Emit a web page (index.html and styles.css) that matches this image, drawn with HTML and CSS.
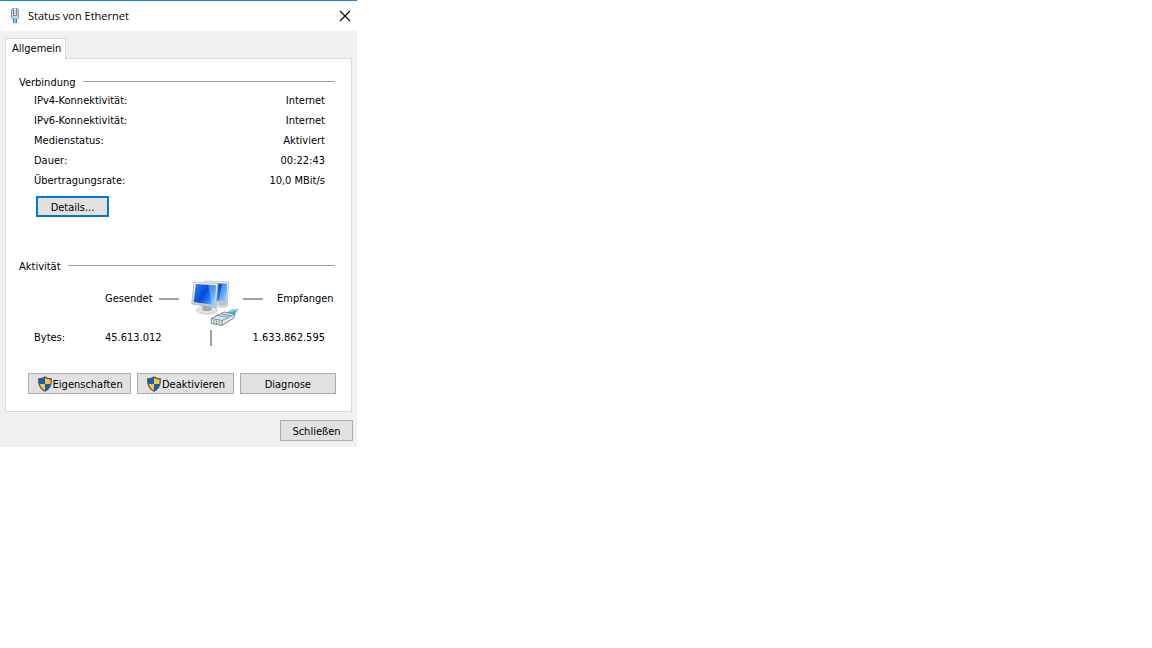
FILE: index.html
```html
<!DOCTYPE html>
<html lang="de">
<head>
    <meta charset="UTF-8">
    <meta name="viewport" content="width=device-width, initial-scale=1.0">
    <title>Status von Ethernet</title>
    <link rel="stylesheet" href="styles.css">
</head>
<body>
    <svg class="symbols" aria-hidden="true">
        <symbol id="shield" viewBox="0 0 16 16">
            <path d="M8 0.3 C6.3 1.6 3.7 2.3 1.2 2.2 C0.6 8.4 2.6 13 8 15.8 C13.4 13 15.4 8.4 14.8 2.2 C12.3 2.3 9.7 1.6 8 0.3Z" fill="#4f5256"/>
            <path d="M8 1.8 C6.5 2.8 4.6 3.4 2.5 3.5 C2.3 5 2.3 6.6 2.7 8 H8Z" fill="#0a63c4"/>
            <path d="M8 1.8 C9.5 2.8 11.4 3.4 13.5 3.5 C13.7 5 13.7 6.6 13.3 8 H8Z" fill="#ffc03a"/>
            <path d="M2.7 8 C3.4 11 5.1 13 8 14.5 V8Z" fill="#ffc03a"/>
            <path d="M13.3 8 C12.6 11 10.9 13 8 14.5 V8Z" fill="#0a63c4"/>
        </symbol>
    </svg>

    <main class="dialog">
        <header class="title-bar">
            <svg class="title-icon" viewBox="0 0 12 16" aria-hidden="true">
                <path d="M2.5 1.5 L3.5 0.5 H8.5 L9.5 1.5 V9.5 L8.5 11 H3.5 L2.5 9.5Z" fill="#ccd6e0" stroke="#8496a8"/>
                <path d="M4.5 0.5 V7.5 H7.5 V0.5" fill="#f3f6f9" stroke="#6c7f92"/>
                <path d="M6 2 V6" stroke="#9fb0c0"/>
                <path d="M4.5 11 V15 M7.5 11 V15" stroke="#1d86ad"/>
                <path d="M6 11 V15.5" stroke="#6fd3f2" stroke-width="2"/>
            </svg>
            <h1>Status von Ethernet</h1>
            <button type="button" class="close-btn" aria-label="Schließen">
                <svg viewBox="0 0 10 10" aria-hidden="true">
                    <path d="M0 0 L10 10 M10 0 L0 10" stroke="#000" stroke-width="1.1"/>
                </svg>
            </button>
        </header>

        <div class="tabs" role="tablist">
            <button type="button" class="tab" role="tab" aria-selected="true">Allgemein</button>
        </div>

        <section class="panel" role="tabpanel">
            <h2>Verbindung</h2>
            <dl class="info">
                <div class="info-row"><dt>IPv4-Konnektivität:</dt><dd>Internet</dd></div>
                <div class="info-row"><dt>IPv6-Konnektivität:</dt><dd>Internet</dd></div>
                <div class="info-row"><dt>Medienstatus:</dt><dd>Aktiviert</dd></div>
                <div class="info-row"><dt>Dauer:</dt><dd>00:22:43</dd></div>
                <div class="info-row"><dt>Übertragungsrate:</dt><dd>10,0 MBit/s</dd></div>
            </dl>
            <button type="button" class="btn btn-default">Details...</button>

            <h2 class="activity-title">Aktivität</h2>
            <table class="activity">
                <thead>
                    <tr>
                        <td class="col-label"></td>
                        <th scope="col" class="col-sent"><span class="dash-after">Gesendet</span></th>
                        <td class="col-icon">
                            <svg class="network-icon" viewBox="0 0 48 48" aria-hidden="true">
                                <defs>
                                    <linearGradient id="screen" x1="0" y1="0.2" x2="1" y2="0.8">
                                        <stop offset="0" stop-color="#2a7df0"/>
                                        <stop offset="0.45" stop-color="#0b48d6"/>
                                        <stop offset="0.75" stop-color="#2f86f5"/>
                                        <stop offset="1" stop-color="#8ccdff"/>
                                    </linearGradient>
                                    <linearGradient id="metal" x1="0" y1="0" x2="0" y2="1">
                                        <stop offset="0" stop-color="#f4f6f7"/>
                                        <stop offset="1" stop-color="#c0c6ca"/>
                                    </linearGradient>
                                </defs>
                                <!-- rear monitor -->
                                <ellipse cx="31" cy="25.5" rx="7" ry="2.5" fill="#d5d9dc"/>
                                <path d="M28 20 L35 20 L35 25 L28 25Z" fill="#b5bcc1"/>
                                <path d="M14 1 L38 2 L36.3 23.5 L17 22Z" fill="url(#metal)" stroke="#b4babf" stroke-width="0.7"/>
                                <path d="M16 3 L36.2 3.8 L34.7 21.3 L18 20Z" fill="url(#screen)"/>
                                <path d="M31 3.6 L36.2 3.8 L34.7 21.3 L28 20.8Z" fill="#8cc8ff" opacity="0.5"/>
                                <!-- front monitor -->
                                <ellipse cx="16" cy="30" rx="10.5" ry="4" fill="#e1e4e6" stroke="#b4babf" stroke-width="0.7"/>
                                <path d="M12 25 L20 26 L21 30 Q16 32.5 11 30Z" fill="#a1a9af"/>
                                <path d="M3 2 L27 3.5 L25 27.5 L0.7 24Z" fill="url(#metal)" stroke="#acb3b9" stroke-width="0.7"/>
                                <path d="M4.8 4 L25.2 5.2 L23.5 25 L2.8 22Z" fill="url(#screen)"/>
                                <path d="M17 4.7 L25.2 5.2 L23.5 25 L21 24.6Z" fill="#a8dbff" opacity="0.4"/>
                                <!-- network plug -->
                                <path d="M35 33 L41 29.5 L47.5 29 L44 34 L38 36Z" fill="#42b4dc"/>
                                <path d="M39 31.5 L46 29.5" stroke="#a9e6fa"/>
                                <path d="M20 38.5 L33 32 L44 34 L43 38 L31 45.5 L20.5 43.5Z" fill="#dae4ed" stroke="#63819b" stroke-width="0.9"/>
                                <path d="M20 38.5 L31 40.5 L44 34 M31 40.5 V45 M26 35.5 L37 37 M30 34 L40 35.5" fill="none" stroke="#63819b" stroke-width="0.8"/>
                                <path d="M23 40 V43.5 M25.5 40.5 V44 M28 41 V44.3" stroke="#a5a254" stroke-width="1.1"/>
                            </svg>
                        </td>
                        <th scope="col" class="col-received"><span class="dash-before">Empfangen</span></th>
                    </tr>
                </thead>
                <tbody>
                    <tr>
                        <th scope="row">Bytes:</th>
                        <td>45.613.012</td>
                        <td><span class="divider"></span></td>
                        <td class="received">1.633.862.595</td>
                    </tr>
                </tbody>
            </table>

            <div class="actions">
                <button type="button" class="btn"><svg class="shield" aria-hidden="true"><use href="#shield"/></svg>Eigenschaften</button>
                <button type="button" class="btn"><svg class="shield" aria-hidden="true"><use href="#shield"/></svg>Deaktivieren</button>
                <button type="button" class="btn">Diagnose</button>
            </div>
        </section>

        <footer class="dialog-footer">
            <button type="button" class="btn">Schließen</button>
        </footer>
    </main>
</body>
</html>
```
FILE: styles.css
```css
* {
    margin: 0;
    padding: 0;
    box-sizing: border-box;
}

body {
    background: #fff;
    color: #000;
    font-family: Tahoma, 'DejaVu Sans Condensed', 'DejaVu Sans', sans-serif;
    font-size: 11px;
    line-height: 16px;
}

button {
    font: inherit;
    color: inherit;
}

.symbols {
    display: none;
}

.dialog {
    width: 100%;
    max-width: 357px;
    background: #f0f0f0;
    border-top: 1px solid #1a80d2;
}

/* Title bar */
.title-bar {
    display: flex;
    align-items: center;
    height: 30px;
    padding: 0 7px 0 9px;
    background: #fff;
}

.title-icon {
    width: 12px;
    height: 16px;
    margin-right: 7px;
}

.title-bar h1 {
    flex: 1;
    font-family: 'Segoe UI', 'Open Sans', sans-serif;
    font-size: 11px;
    font-weight: 400;
}

.close-btn {
    display: flex;
    border: none;
    background: none;
}

.close-btn svg {
    width: 10px;
    height: 10px;
    overflow: visible;
}

/* Tabs */
.tabs {
    display: flex;
    padding: 7px 5px 0;
}

.tab {
    position: relative;
    height: 21px;
    margin-bottom: -1px;
    padding: 0 4px 0 6px;
    background: #fff;
    border: 1px solid #d9d9d9;
    border-bottom: none;
}

.panel {
    margin: 0 5px;
    padding: 15px 16px 17px 13px;
    background: #fff;
    border: 1px solid #d9d9d9;
}

.panel h2 {
    display: flex;
    gap: 7px;
    font-size: 11px;
    font-weight: 400;
    line-height: 17px;
}

.panel h2::after {
    content: '';
    flex: 1;
    height: 1px;
    margin-top: 7px;
    background: #a0a0a0;
}

/* Connection */
.info {
    padding: 0 10px 0 15px;
}

.info-row {
    display: flex;
    justify-content: space-between;
    line-height: 20px;
}

/* Buttons */
.btn {
    display: flex;
    align-items: center;
    justify-content: center;
    min-width: 73px;
    height: 21px;
    padding-top: 1px;
    background: #e1e1e1;
    border: 1px solid #adadad;
    line-height: 17px;
}

.btn-default {
    margin: 5px 0 0 17px;
    border: 2px solid #0078d7;
}

.shield {
    width: 16px;
    height: 16px;
}

/* Activity */
.panel .activity-title {
    margin: 41px 0 5px;
}

.activity {
    width: 100%;
    table-layout: fixed;
    border-collapse: collapse;
}

.activity th,
.activity td {
    font-weight: 400;
    text-align: left;
    line-height: 20px;
}

.activity thead th {
    padding-top: 9px;
    vertical-align: top;
}

.activity tbody th {
    padding-left: 15px;
}

.col-label {
    width: 86px;
}

.col-sent {
    width: 86px;
}

.col-icon {
    width: 52px;
}

.network-icon {
    display: block;
    width: 48px;
    height: 48px;
}

.dash-after,
.dash-before {
    display: flex;
    align-items: center;
    gap: 6px;
}

.dash-before {
    gap: 14px;
}

.dash-after::after,
.dash-before::before {
    content: '';
    width: 20px;
    height: 2px;
    background: #a0a0a0;
}

.divider {
    display: block;
    width: 2px;
    height: 16px;
    margin-left: 19px;
    background: #a0a0a0;
}

.activity .received {
    padding-right: 10px;
    text-align: right;
}

.actions {
    display: flex;
    gap: 6px;
    margin: 25px -1px 0 9px;
}

.actions .btn {
    flex: 1 1 96px;
}

.actions .btn:first-child {
    flex-basis: 103px;
}

.dialog-footer {
    display: flex;
    justify-content: flex-end;
    padding: 8px 4px 6px;
}
```
